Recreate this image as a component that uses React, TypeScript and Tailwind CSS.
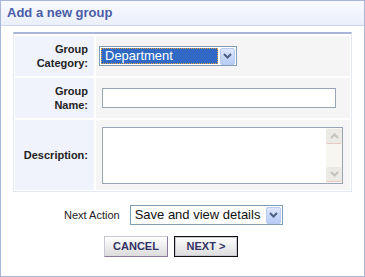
import React from 'react';

const font = { fontFamily: '"Liberation Sans", Arial, sans-serif' };

const Chevron: React.FC<{ up?: boolean; color: string }> = ({ up, color }) => (
  <svg width="9" height="6" viewBox="0 0 9 6">
    <path d={up ? 'M1 5 L4.5 1.5 L8 5' : 'M1 1 L4.5 4.5 L8 1'} fill="none" stroke={color} strokeWidth="2" />
  </svg>
);

const DropButton: React.FC = () => (
  <div className="flex h-[17px] w-[15px] items-center justify-center rounded-[2px] border border-[#b9c9ef] bg-gradient-to-b from-[#dce6fd] to-[#b7cbf5]">
    <Chevron color="#4d6185" />
  </div>
);

const App: React.FC = () => {
  return (
    <div className="h-[277px] w-[365px] border border-[#a8b6de] bg-white" style={font}>
      {/* header */}
      <div className="flex h-[25px] items-center border-b border-[#c4d6f0] bg-gradient-to-b from-[#f8faff] to-[#eaeffb] pl-[6px]">
        <h1 className="text-[13px] font-bold text-[#4b5ca6]">Add a new group</h1>
      </div>

      {/* form table */}
      <div className="ml-[12px] mt-[6px] w-[339px] border-x border-b border-t-2 border-[#e4e8f2] border-t-[#a9b4dc] px-[1px] pb-[1px] pt-[2px]">
        <div className="flex flex-col gap-[2px] text-[11px] text-[#222]">
          <div className="flex h-[40px] gap-[2px]">
            <div className="flex w-[79px] items-center justify-end bg-[#f0f3fc] pr-[6px] text-right font-bold leading-[14px]">
              Group<br />Category:
            </div>
            <div className="flex flex-1 items-center bg-[#f5f5f5] pl-[3px]">
              <div className="flex h-[20px] w-[138px] items-center border border-[#7f9db9] bg-white p-[1px]">
                <div className="flex h-[16px] w-[117px] items-center border border-dotted border-[#e8a040] bg-[#316ac5] pl-[3px] text-[13px] text-white">
                  Department
                </div>
                <div className="ml-[2px]">
                  <DropButton />
                </div>
              </div>
            </div>
          </div>

          <div className="flex h-[40px] gap-[2px]">
            <div className="flex w-[79px] items-center justify-end bg-[#f0f3fc] pr-[6px] text-right font-bold leading-[14px]">
              Group<br />Name:
            </div>
            <div className="flex flex-1 items-center bg-[#f5f5f5] pl-[6px]">
              <div className="h-[20px] w-[234px] border border-[#97a5b5] bg-white" />
            </div>
          </div>

          <div className="flex h-[70px] gap-[2px]">
            <div className="flex w-[79px] items-center justify-end bg-[#f0f3fc] pr-[6px] font-bold">
              Description:
            </div>
            <div className="flex flex-1 items-center bg-[#f5f5f5] pl-[6px]">
              <div className="flex h-[57px] w-[241px] justify-end border border-[#97a5b5] bg-white">
                <div className="flex w-[16px] flex-col justify-between bg-[#f7f6f1] pb-[1px] pt-[1px]">
                  <div className="flex h-[15px] items-center justify-center rounded-[2px] border-b border-[#e8c8c0] bg-[#eceae4]">
                    <Chevron up color="#c4c4bc" />
                  </div>
                  <div className="flex h-[15px] items-center justify-center rounded-[2px] border-b border-[#e8c8c0] bg-[#eceae4]">
                    <Chevron color="#c4c4bc" />
                  </div>
                </div>
              </div>
            </div>
          </div>
        </div>
      </div>

      {/* next action */}
      <div className="mt-[13px] flex items-center pl-[63px]">
        <span className="text-[11px] text-[#222]">Next Action</span>
        <div className="ml-[10px] flex h-[20px] w-[153px] items-center justify-between border border-[#7f9db9] bg-white pl-[4px] pr-[1px]">
          <span className="text-[13px] text-[#111]">Save and view details</span>
          <DropButton />
        </div>
      </div>

      {/* buttons */}
      <div className="mt-[11px] flex gap-[6px] pl-[103px]">
        <button className="h-[21px] w-[64px] border border-[#c8c8d0] border-b-[#8a7a9a] border-r-[#8a7a9a] bg-gradient-to-b from-[#ffffff] to-[#dcdcdc] text-[11px] font-bold text-[#333366]">
          CANCEL
        </button>
        <button className="h-[21px] w-[64px] border border-[#111] bg-gradient-to-b from-[#ffffff] to-[#dcdcdc] text-[11px] font-bold text-[#333366] shadow-[inset_0_0_0_1px_#c8c8d0]">
          NEXT &gt;
        </button>
      </div>
    </div>
  );
};

export default App;
